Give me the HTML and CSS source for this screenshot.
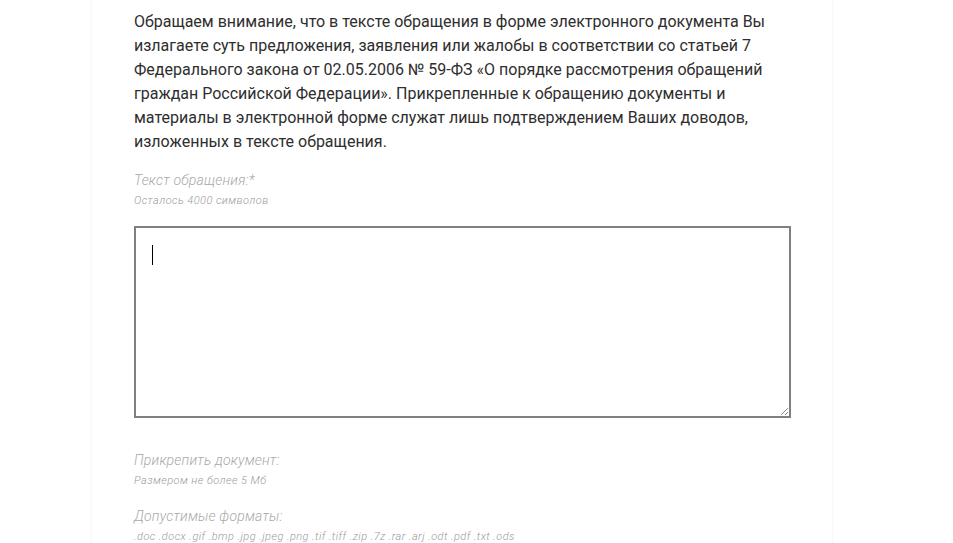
FILE: index.html
```html
<!DOCTYPE html>
<html lang="ru">
<head>
<meta charset="utf-8">
<title>Обращение</title>
<link rel="stylesheet" href="styles.css">
</head>
<body>
<div class="page">
  <div class="card">
    <p class="notice">Обращаем внимание, что в тексте обращения в форме электронного документа Вы излагаете суть предложения, заявления или жалобы в соответствии со статьей 7 Федерального закона от 02.05.2006 № 59-ФЗ «О порядке рассмотрения обращений граждан Российской Федерации». Прикрепленные к обращению документы и материалы в электронной форме служат лишь подтверждением Ваших доводов, изложенных в тексте обращения.</p>

    <div class="field">
      <div class="label">Текст обращения:*</div>
      <div class="hint">Осталось 4000 символов</div>
    </div>

    <div class="textbox">
      <span class="caret"></span>
      <svg class="grip" width="10" height="10" viewBox="0 0 10 10">
        <line x1="9" y1="2" x2="2" y2="9" stroke="#8a8a8a" stroke-width="1"/>
        <line x1="9" y1="6" x2="6" y2="9" stroke="#8a8a8a" stroke-width="1"/>
      </svg>
    </div>

    <div class="field attach">
      <div class="label">Прикрепить документ:</div>
      <div class="hint">Размером не более 5 Мб</div>
    </div>

    <div class="field formats">
      <div class="label">Допустимые форматы:</div>
      <div class="hint">.doc .docx .gif .bmp .jpg .jpeg .png .tif .tiff .zip .7z .rar .arj .odt .pdf .txt .ods</div>
    </div>
  </div>
</div>
</body>
</html>
```
FILE: styles.css
```css
html, body {
  margin: 0;
  padding: 0;
  background: #ffffff;
  height: 100%;
  overflow: hidden;
}

.page {
  padding-left: 92px;
}

.card {
  width: 657px;
  min-height: 600px;
  padding: 10px 41px 0 42px;
  background: #ffffff;
  box-shadow: 0 0 3px rgba(0, 0, 0, 0.07);
  font-family: Roboto, "Noto Sans", sans-serif;
}

.notice {
  margin: 0;
  font-size: 16px;
  line-height: 24px;
  color: #2e2e2e;
}

.field {
  margin-top: 17px;
}

.label {
  font-size: 14px;
  line-height: 18px;
  font-style: italic;
  font-weight: 300;
  letter-spacing: 0.2px;
  color: #a8a8a8;
}

.hint {
  margin-top: 5px;
  font-size: 11px;
  line-height: 13px;
  font-style: italic;
  font-weight: 300;
  letter-spacing: 0.45px;
  color: #9a9a9a;
}

.textbox {
  position: relative;
  margin-top: 19px;
  border: 2px solid #808080;
  padding: 17px 16px 0;
  box-sizing: border-box;
  height: 192px;
}

.caret {
  display: block;
  width: 1px;
  height: 20px;
  background: #000000;
}

.grip {
  position: absolute;
  right: 0;
  bottom: 0;
}

.attach {
  margin-top: 33px;
}

.formats {
  margin-top: 20px;
}
```
